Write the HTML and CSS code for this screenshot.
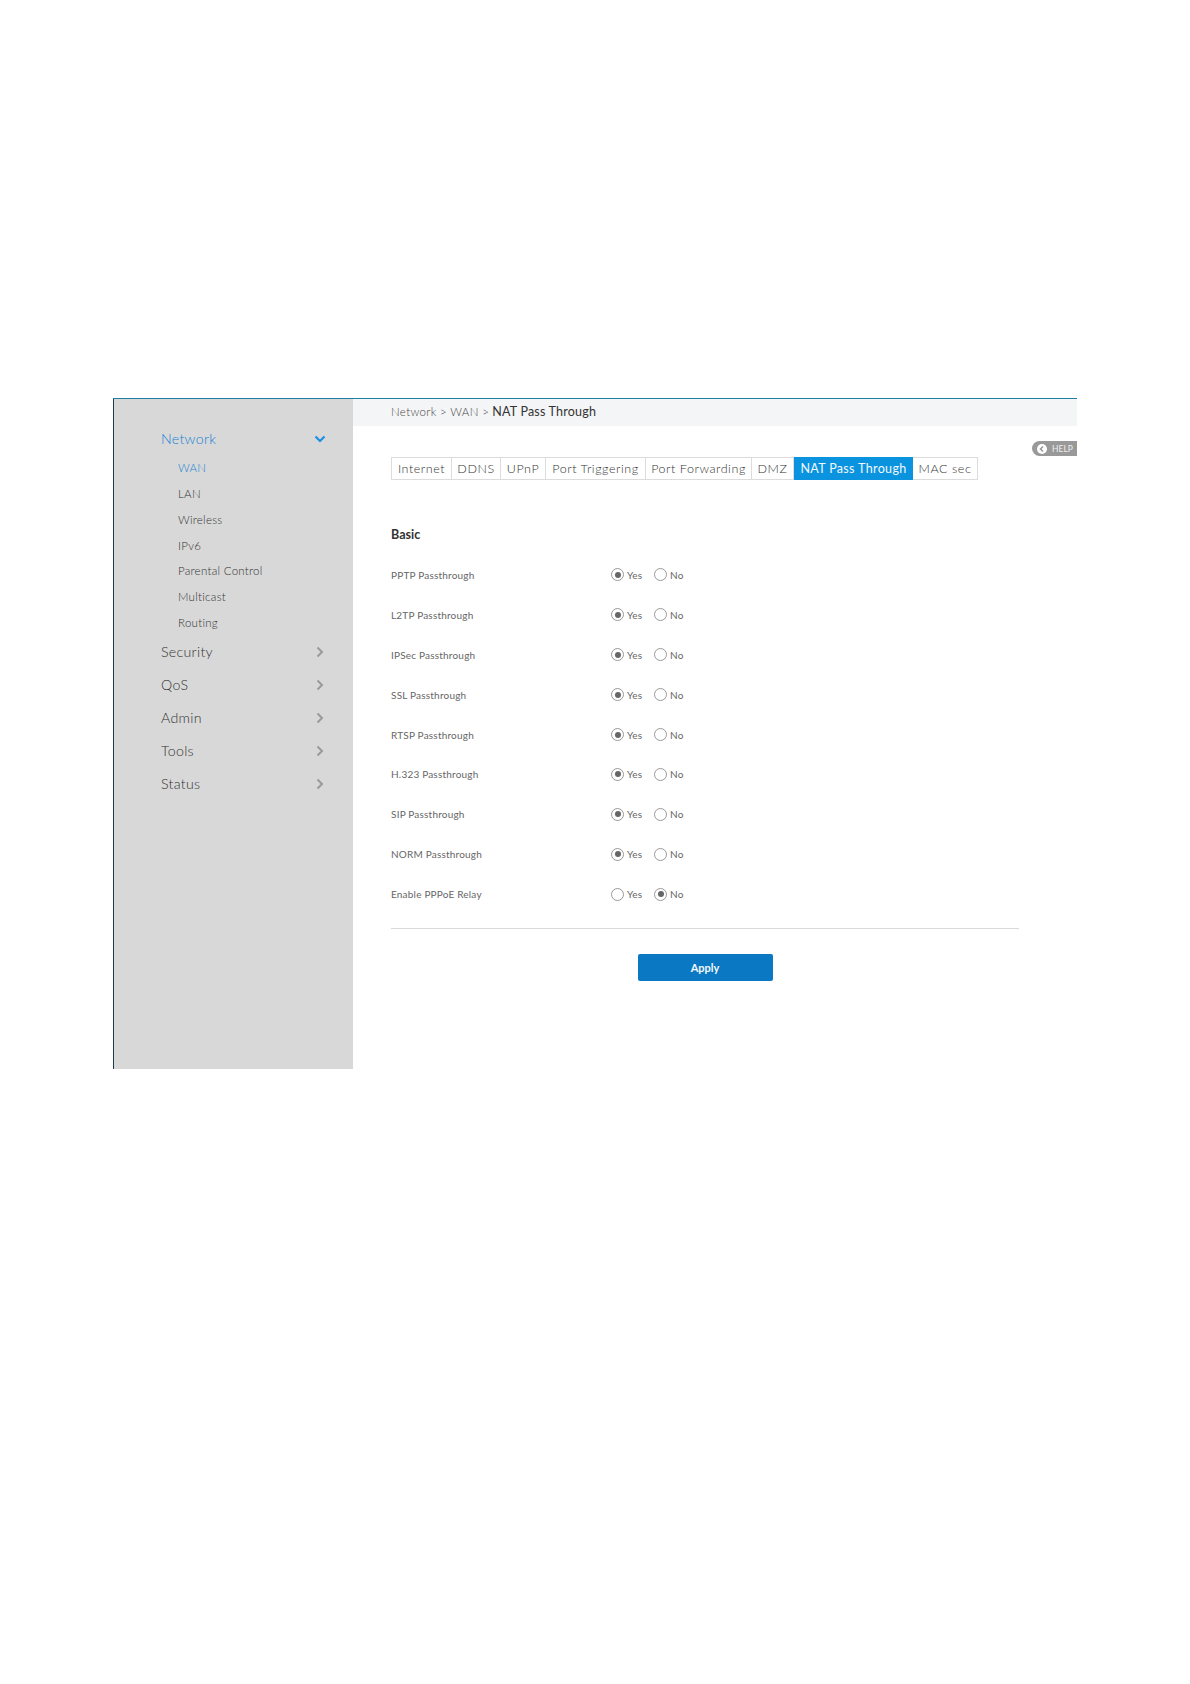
FILE: index.html
```html
<!DOCTYPE html>
<html lang="en">
<head>
<meta charset="utf-8">
<title>NAT Pass Through</title>
<link rel="stylesheet" href="styles.css">
</head>
<body>
<div class="app">
  <aside class="sidebar">
    <div class="menu-head active"><span>Network</span><svg class="chev" viewBox="0 0 12 12"><path d="M1.500 3.500 6 8l4.500-4.500" fill="none" stroke="#1b8fe0" stroke-width="2.200"/></svg></div>
    <ul class="submenu">
      <li class="active">WAN</li><li>LAN</li><li>Wireless</li><li>IPv6</li><li>Parental Control</li><li>Multicast</li><li>Routing</li>
    </ul>
    <div class="menu-head"><span>Security</span><svg class="chev" viewBox="0 0 12 12"><path d="M3.500 1.500 8 6l-4.500 4.500" fill="none" stroke="#9a9a9a" stroke-width="2"/></svg></div>
    <div class="menu-head"><span>QoS</span><svg class="chev" viewBox="0 0 12 12"><path d="M3.500 1.500 8 6l-4.500 4.500" fill="none" stroke="#9a9a9a" stroke-width="2"/></svg></div>
    <div class="menu-head"><span>Admin</span><svg class="chev" viewBox="0 0 12 12"><path d="M3.500 1.500 8 6l-4.500 4.500" fill="none" stroke="#9a9a9a" stroke-width="2"/></svg></div>
    <div class="menu-head"><span>Tools</span><svg class="chev" viewBox="0 0 12 12"><path d="M3.500 1.500 8 6l-4.500 4.500" fill="none" stroke="#9a9a9a" stroke-width="2"/></svg></div>
    <div class="menu-head"><span>Status</span><svg class="chev" viewBox="0 0 12 12"><path d="M3.500 1.500 8 6l-4.500 4.500" fill="none" stroke="#9a9a9a" stroke-width="2"/></svg></div>
  </aside>
  <main class="main">
    <div class="crumb"><span class="crumb-path">Network &gt; WAN &gt;</span><span class="crumb-current">NAT Pass Through</span></div>
    <div class="help-row">
      <div class="help"><svg class="help-icon" viewBox="0 0 10 10"><circle cx="5" cy="5" r="5" fill="#fff"/><path d="M6 2.500 3.500 5 6 7.500" fill="none" stroke="#999" stroke-width="1.600"/></svg><span>HELP</span></div>
    </div>
    <nav class="tabs">
      <span class="tab t1">Internet</span><span class="tab t2">DDNS</span><span class="tab t3">UPnP</span><span class="tab t4">Port Triggering</span><span class="tab t5">Port Forwarding</span><span class="tab t6">DMZ</span><span class="tab t7 on">NAT Pass Through</span><span class="tab t8">MAC sec</span>
    </nav>
    <h2 class="section">Basic</h2>
    <div class="form">
      <div class="row"><span class="label">PPTP Passthrough</span><span class="radio sel"></span><span class="opt">Yes</span><span class="radio"></span><span class="opt">No</span></div>
      <div class="row"><span class="label">L2TP Passthrough</span><span class="radio sel"></span><span class="opt">Yes</span><span class="radio"></span><span class="opt">No</span></div>
      <div class="row"><span class="label">IPSec Passthrough</span><span class="radio sel"></span><span class="opt">Yes</span><span class="radio"></span><span class="opt">No</span></div>
      <div class="row"><span class="label">SSL Passthrough</span><span class="radio sel"></span><span class="opt">Yes</span><span class="radio"></span><span class="opt">No</span></div>
      <div class="row"><span class="label">RTSP Passthrough</span><span class="radio sel"></span><span class="opt">Yes</span><span class="radio"></span><span class="opt">No</span></div>
      <div class="row"><span class="label">H.323 Passthrough</span><span class="radio sel"></span><span class="opt">Yes</span><span class="radio"></span><span class="opt">No</span></div>
      <div class="row"><span class="label">SIP Passthrough</span><span class="radio sel"></span><span class="opt">Yes</span><span class="radio"></span><span class="opt">No</span></div>
      <div class="row"><span class="label">NORM Passthrough</span><span class="radio sel"></span><span class="opt">Yes</span><span class="radio"></span><span class="opt">No</span></div>
      <div class="row"><span class="label">Enable PPPoE Relay</span><span class="radio"></span><span class="opt">Yes</span><span class="radio sel"></span><span class="opt">No</span></div>
    </div>
    <div class="actions"><button class="apply" type="button">Apply</button></div>
  </main>
</div>
</body>
</html>
```
FILE: styles.css
```css
* { box-sizing: border-box; }
html, body { margin: 0; background: #fff; }
body {
  height: 1684px;
  padding: 398px 0 0 113px;
  font-family: Lato, "Open Sans", sans-serif;
  font-weight: 300;
  color: #555;
}
.app {
  display: flex;
  width: 964px;
  height: 671px;
  border-top: 1px solid #1c7fa3;
}
.sidebar {
  width: 240px;
  background: #d8d8d8;
  border-left: 1px solid #1f3a4d;
  padding: 27px 0 0 47px;
}
.menu-head {
  display: flex;
  align-items: center;
  justify-content: space-between;
  width: 166px;
  height: 33px;
  font-size: 14.200px;
  letter-spacing: 0.3px;
  color: #333;
}
.menu-head.active { color: #1580d6; height: 24px; }
.chev { width: 12px; height: 12px; margin: 1px 1px 0 0; }
.submenu { list-style: none; margin: 0 0 -1px 17px; padding: 5px 0 0; }
.submenu li {
  height: 25.850px;
  line-height: 25.850px;
  font-size: 11.500px;
  letter-spacing: 0.28px;
  color: #333;
}
.submenu li.active { color: #1580d6; }
.main { flex: 1; min-width: 0; display: flex; flex-direction: column; }
.crumb {
  height: 27px;
  background: #f4f5f6;
  padding-left: 38px;
  line-height: 21px;
  white-space: nowrap;
}
.crumb-path { font-size: 11.500px; letter-spacing: 0.35px; color: #444; }
.crumb-current { margin-left: 3px; font-size: 12.500px; font-weight: 400; letter-spacing: 0.2px; color: #333; }
.help-row { display: flex; justify-content: flex-end; padding-top: 15px; height: 31px; }
.help {
  display: flex;
  align-items: center;
  gap: 5px;
  width: 45px;
  height: 15px;
  padding-left: 5px;
  background: #999;
  border-radius: 8px 0 0 8px;
  font-size: 8.500px;
  font-weight: 400;
  color: #eee;
}
.help-icon { width: 10px; height: 10px; }
.tabs {
  display: flex;
  height: 23px;
  margin-left: 38px;
  width: 587px;
  border: 1px solid #dcdcdc;
}
.tab {
  flex: none;
  display: flex;
  align-items: center;
  justify-content: center;
  border-right: 1px solid #dcdcdc;
  font-size: 12.500px;
  letter-spacing: 0.55px;
  color: #333;
  white-space: nowrap;
}
.tab:last-child { border-right: 0; }
.t1 { width: 60px; } .t2 { width: 49px; } .t3 { width: 45px; } .t4 { width: 100px; }
.t5 { width: 106px; } .t6 { width: 42px; } .t7 { width: 119px; } .t8 { width: 64px; }
.tab.on { background: #0a94e0; color: #f2f8fd; font-weight: 400; letter-spacing: 0.35px; border-right: 0; margin: -1px 0; height: 23px; }
.section {
  margin: 45px 0 0 38px;
  height: 20px;
  font-size: 12.500px;
  line-height: 20px;
  font-weight: 700;
  color: #333;
}
.form { margin: 10px 0 0 38px; }
.row {
  display: flex;
  align-items: center;
  height: 39.900px;
  font-size: 10px;
  font-weight: 400;
  letter-spacing: 0.2px;
  color: #666;
}
.label { width: 220px; }
.radio {
  width: 13px;
  height: 13px;
  border: 1px solid #999;
  border-radius: 50%;
  background: #fff;
  display: flex;
  align-items: center;
  justify-content: center;
}
.radio.sel::after {
  content: "";
  width: 6px;
  height: 6px;
  border-radius: 50%;
  background: #666;
}
.opt { width: 30px; padding-left: 3px; }
.actions {
  width: 628px;
  margin-left: 38px;
  margin-top: 14px;
  padding-top: 25px;
  border-top: 1px solid #d9d9d9;
  display: flex;
  justify-content: center;
}
.apply {
  width: 135px;
  height: 27px;
  background: #0a78c2;
  border: 0;
  border-radius: 2px;
  color: #f4f9fc;
  font: 700 11px Lato, sans-serif;
}
```
